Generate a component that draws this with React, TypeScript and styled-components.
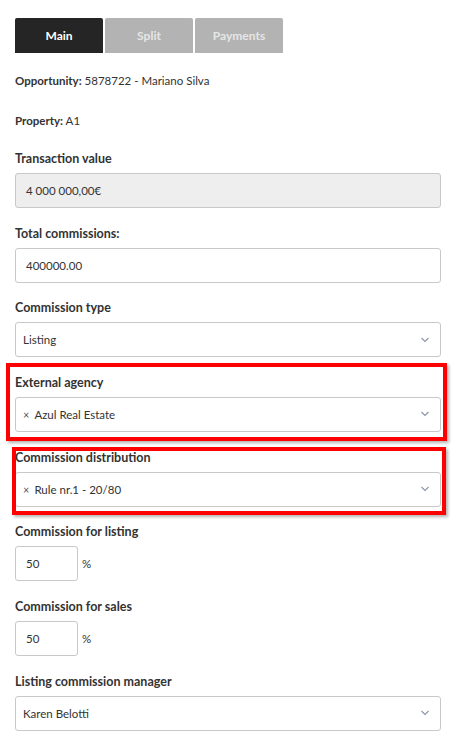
import styled, { createGlobalStyle } from "styled-components";

const GlobalStyle = createGlobalStyle`
  body {
    margin: 0;
    background: #ffffff;
    font-family: Lato, "Open Sans", Arial, sans-serif;
    color: #333333;
  }
`;

const Page = styled.div`
  padding: 18px 17px 20px 15px;
  width: 426px;
`;

const Tabs = styled.div`
  display: flex;
  gap: 2px;
  margin-bottom: 19px;
`;

const Tab = styled.button<{ $active?: boolean }>`
  width: 88px;
  height: 35px;
  border: none;
  border-radius: 2px 2px 0 0;
  font-family: Lato, Arial, sans-serif;
  font-size: 12px;
  font-weight: 700;
  padding: 0;
  background: ${(p) => (p.$active ? "#252525" : "#b3b3b3")};
  color: ${(p) => (p.$active ? "#ffffff" : "#e6e6e6")};
`;

const InfoLine = styled.p<{ $gap: number }>`
  margin: 0 0 ${(p) => p.$gap}px;
  font-size: 11.5px;
  line-height: 18px;

  > b {
    font-weight: 700;
  }
`;

const Field = styled.div<{ $mark?: [number, number, number, number] }>`
  position: relative;
  margin-bottom: 16.67px;

  ${(p) =>
    p.$mark
      ? `&::after {
    content: "";
    position: absolute;
    top: ${p.$mark[0]}px;
    right: ${p.$mark[1]}px;
    bottom: ${p.$mark[2]}px;
    left: ${p.$mark[3]}px;
    border: 4px solid #ff0000;
    box-shadow: 2px 2px 3px rgba(0, 0, 0, 0.3);
    pointer-events: none;
  }`
      : ""}
`;

const Label = styled.div`
  font-size: 12.5px;
  font-weight: 700;
  line-height: 18px;
  margin-bottom: 5px;
  color: #333333;
`;

const Box = styled.div<{ $disabled?: boolean; $small?: boolean }>`
  box-sizing: border-box;
  height: 35px;
  width: ${(p) => (p.$small ? "63px" : "100%")};
  border: 1px solid #c8c8c8;
  border-radius: 3px;
  background: ${(p) => (p.$disabled ? "#eeeeee" : "#ffffff")};
  display: flex;
  align-items: center;
  padding: 0 10px;
  font-size: 11.5px;
  color: #333333;
`;

const SelectBox = styled(Box)`
  padding: 0 10px 0 7px;
  justify-content: space-between;
`;

const Value = styled.span`
  display: flex;
  align-items: center;
  gap: 5px;
`;

const Remove = styled.span`
  font-size: 11px;
  color: #555555;
`;

const Chevron = styled.svg`
  width: 10px;
  height: 6px;
`;

const PercentRow = styled.div`
  display: flex;
  align-items: center;
  gap: 4px;
  font-size: 11.5px;
`;

const Select = ({ value, removable }: { value: string; removable?: boolean }) => (
  <SelectBox>
    <Value>
      {removable && <Remove>×</Remove>}
      {value}
    </Value>
    <Chevron viewBox="0 0 10 6">
      <path d="M1.5 1 L5 4.5 L8.5 1" fill="none" stroke="#8a94a3" strokeWidth="1.1" />
    </Chevron>
  </SelectBox>
);

const App = () => {
  return (
    <Page>
      <GlobalStyle />
      <Tabs>
        <Tab $active>Main</Tab>
        <Tab>Split</Tab>
        <Tab>Payments</Tab>
      </Tabs>

      <InfoLine $gap={22}>
        <b>Opportunity:</b> 5878722 - Mariano Silva
      </InfoLine>
      <InfoLine $gap={20}>
        <b>Property:</b> A1
      </InfoLine>

      <Field>
        <Label>Transaction value</Label>
        <Box $disabled>4 000 000,00€</Box>
      </Field>

      <Field>
        <Label>Total commissions:</Label>
        <Box>400000.00</Box>
      </Field>

      <Field>
        <Label>Commission type</Label>
        <Select value="Listing" />
      </Field>

      <Field $mark={[-11, -6, -9, -9]}>
        <Label>External agency</Label>
        <Select value="Azul Real Estate" removable />
      </Field>

      <Field $mark={[-2, -5, -8, -3]}>
        <Label>Commission distribution</Label>
        <Select value="Rule nr.1 - 20/80" removable />
      </Field>

      <Field>
        <Label>Commission for listing</Label>
        <PercentRow>
          <Box $small>50</Box>%
        </PercentRow>
      </Field>

      <Field>
        <Label>Commission for sales</Label>
        <PercentRow>
          <Box $small>50</Box>%
        </PercentRow>
      </Field>

      <Field>
        <Label>Listing commission manager</Label>
        <Select value="Karen Belotti" />
      </Field>
    </Page>
  );
};

export default App;
